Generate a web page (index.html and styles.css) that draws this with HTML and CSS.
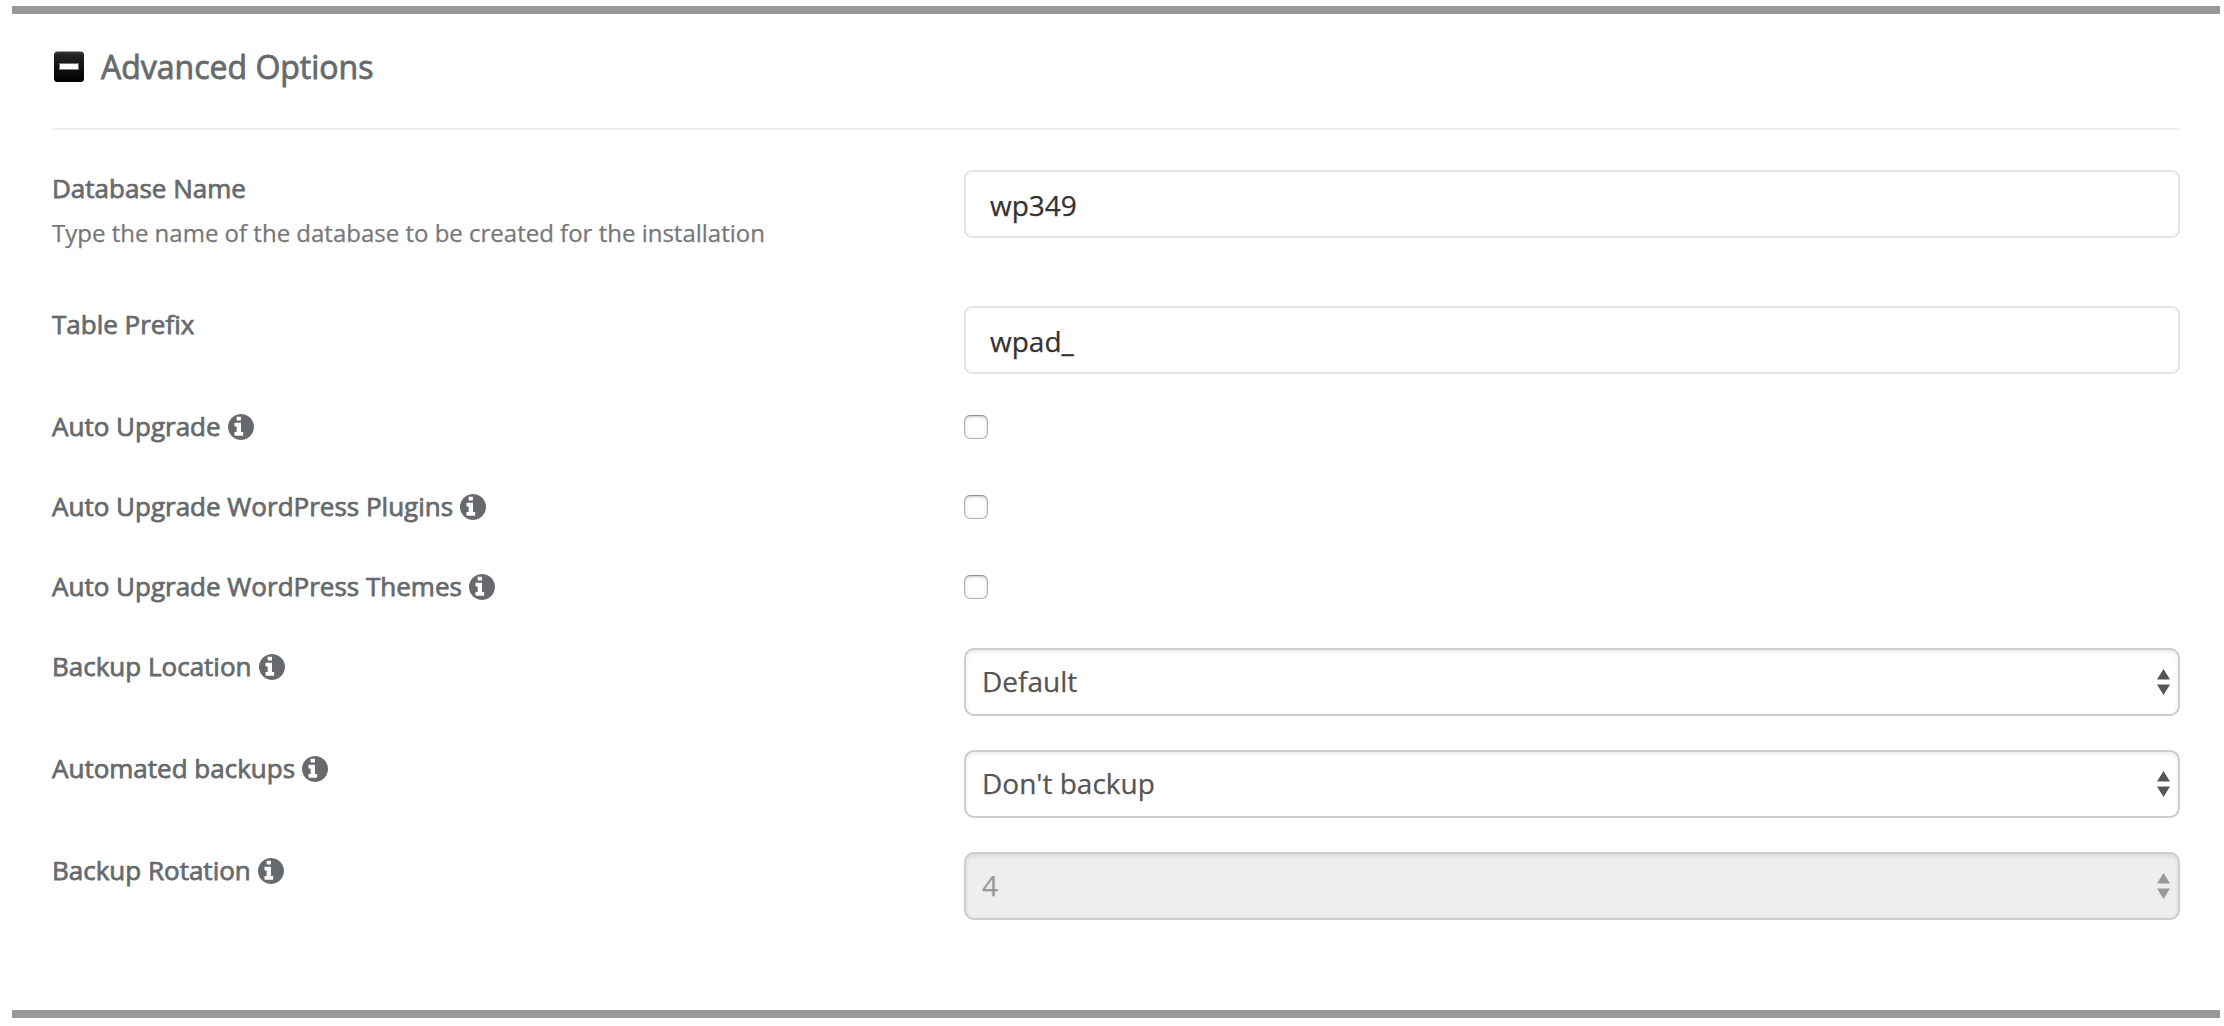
FILE: index.html
```html
<!DOCTYPE html>
<html lang="en">
<head>
<meta charset="utf-8">
<title>Advanced Options</title>
<link rel="stylesheet" href="styles.css">
</head>
<body>
<svg class="sprite" aria-hidden="true">
  <symbol id="info" viewBox="128 128 1536 1536"><path d="M1024 1376v-160q0-14-9-23t-23-9h-96v-512q0-14-9-23t-23-9h-320q-14 0-23 9t-9 23v160q0 14 9 23t23 9h96v320h-96q-14 0-23 9t-9 23v160q0 14 9 23t23 9h448q14 0 23-9t9-23zM896 480v-160q0-14-9-23t-23-9h-192q-14 0-23 9t-9 23v160q0 14 9 23t23 9h192q14 0 23-9t9-23zM1664 896q0 209-103 385.500t-279.500 279.500-385.500 103-385.500-103-279.500-279.500-103-385.500 103-385.500 279.500-279.500 385.500-103 385.500 103 279.500 279.500 103 385.500z"/></symbol>
  <symbol id="arrows" viewBox="0 0 13 26"><path d="M6.500 0L13 10.500H0zM6.500 26L13 15.500H0z"/></symbol>
</svg>
<main class="panel">
  <header class="panel-head">
    <svg class="toggle" viewBox="0 0 30 31">
      <defs><linearGradient id="shade" x1="0" y1="0" x2="0" y2="1"><stop offset="0" stop-color="#3c3c3c"/><stop offset=".12" stop-color="#222"/><stop offset="1" stop-color="#000"/></linearGradient></defs>
      <rect y=".5" width="30" height="30.500" rx="3.500" fill="url(#shade)"/>
      <rect x="5" y="12" width="20" height="7" fill="#777"/>
      <rect x="6" y="13" width="18" height="5" fill="#fff"/>
    </svg>
    <h1 class="title">Advanced Options</h1>
  </header>
  <form class="options">
    <div class="row row-help">
      <div><label class="label" for="db">Database Name</label><p class="help">Type the name of the database to be created for the installation</p></div>
      <input class="field" id="db" type="text" value="wp349">
    </div>
    <div class="row row-field">
      <label class="label" for="prefix">Table Prefix</label>
      <input class="field" id="prefix" type="text" value="wpad_" spellcheck="false">
    </div>
    <div class="row row-check">
      <label class="label" for="up">Auto Upgrade <svg class="info"><use href="#info"/></svg></label>
      <input class="check" id="up" type="checkbox">
    </div>
    <div class="row row-check">
      <label class="label" for="plugins">Auto Upgrade WordPress Plugins <svg class="info"><use href="#info"/></svg></label>
      <input class="check" id="plugins" type="checkbox">
    </div>
    <div class="row row-check">
      <label class="label" for="themes">Auto Upgrade WordPress Themes <svg class="info"><use href="#info"/></svg></label>
      <input class="check" id="themes" type="checkbox">
    </div>
    <div class="row row-field">
      <label class="label" for="location">Backup Location <svg class="info"><use href="#info"/></svg></label>
      <div class="select-wrap"><select class="select" id="location"><option>Default</option></select><svg class="arrows"><use href="#arrows"/></svg></div>
    </div>
    <div class="row row-field">
      <label class="label" for="auto">Automated backups <svg class="info"><use href="#info"/></svg></label>
      <div class="select-wrap"><select class="select" id="auto"><option>Don't backup</option></select><svg class="arrows"><use href="#arrows"/></svg></div>
    </div>
    <div class="row row-field">
      <label class="label" for="rotation">Backup Rotation <svg class="info"><use href="#info"/></svg></label>
      <div class="select-wrap"><select class="select" id="rotation" disabled><option>4</option></select><svg class="arrows arrows-off"><use href="#arrows"/></svg></div>
    </div>
  </form>
</main>
</body>
</html>
```

FILE: styles.css
```css
* { box-sizing: border-box; }
body { margin: 0; background: #fff; font-family: "Open Sans", sans-serif; }
.sprite { display: none; }

.panel {
  height: 1012px;
  margin: 6px 4px 8px 12px;
  padding: 0 40px;
  border-top: 8px solid #999;
  border-bottom: 8px solid #999;
}

.panel-head {
  display: flex;
  gap: 17px;
  height: 116px;
  padding: 29px 0 0 2px;
  border-bottom: 2px solid #eee;
}
.toggle { width: 30px; height: 31px; margin-top: 8px; }
.title {
  margin: 0;
  color: #666a6d;
  font-size: 32px;
  font-weight: 400;
  line-height: 47px;
  -webkit-text-stroke: 0.8px;
}

.options { padding-top: 40px; }
.row {
  display: grid;
  grid-template-columns: 912px 1fr;
  align-items: start;
}
.row-help { height: 136px; }
.row-field { height: 102px; }
.row-check { height: 80px; }

.label {
  display: block;
  color: #666a6d;
  font-size: 26px;
  line-height: 36px;
  -webkit-text-stroke: 0.75px;
}
.help {
  margin: 10px 0 0;
  color: #777;
  font-size: 24px;
  line-height: 33px;
  -webkit-text-stroke: 0.25px;
}
.info {
  width: 26px;
  height: 26px;
  margin-left: 0.5px;
  fill: currentColor;
  stroke: none;
  vertical-align: -4px;
}

.field, .select {
  display: block;
  width: 100%;
  height: 68px;
  font: 28px/38px "Open Sans", sans-serif;
  -webkit-text-stroke: 0.25px;
}
.field {
  padding: 2px 24px 0;
  border: 2px solid #e5e5e5;
  border-radius: 8px;
  color: #333;
}
.select {
  appearance: none;
  padding: 0 40px 2px 16px;
  border: 2px solid #ccc;
  border-radius: 10px;
  background: #fff;
  box-shadow: inset 0 2px 4px rgba(0, 0, 0, .09);
  color: #555;
}
.select:disabled { background: #eee; color: #999; opacity: 1; }
.select-wrap { position: relative; }
.arrows {
  position: absolute;
  top: 21px;
  right: 10px;
  width: 13px;
  height: 26px;
  fill: #555;
}
.arrows-off { fill: #999; }

.check {
  appearance: none;
  width: 24px;
  height: 24px;
  margin: 7px 0 0;
  border: 1px solid #b0b0b0;
  border-top-color: #929292;
  border-radius: 6px;
  background: #fff;
  box-shadow: inset 0 1px 3px rgba(0, 0, 0, .25);
}
```
